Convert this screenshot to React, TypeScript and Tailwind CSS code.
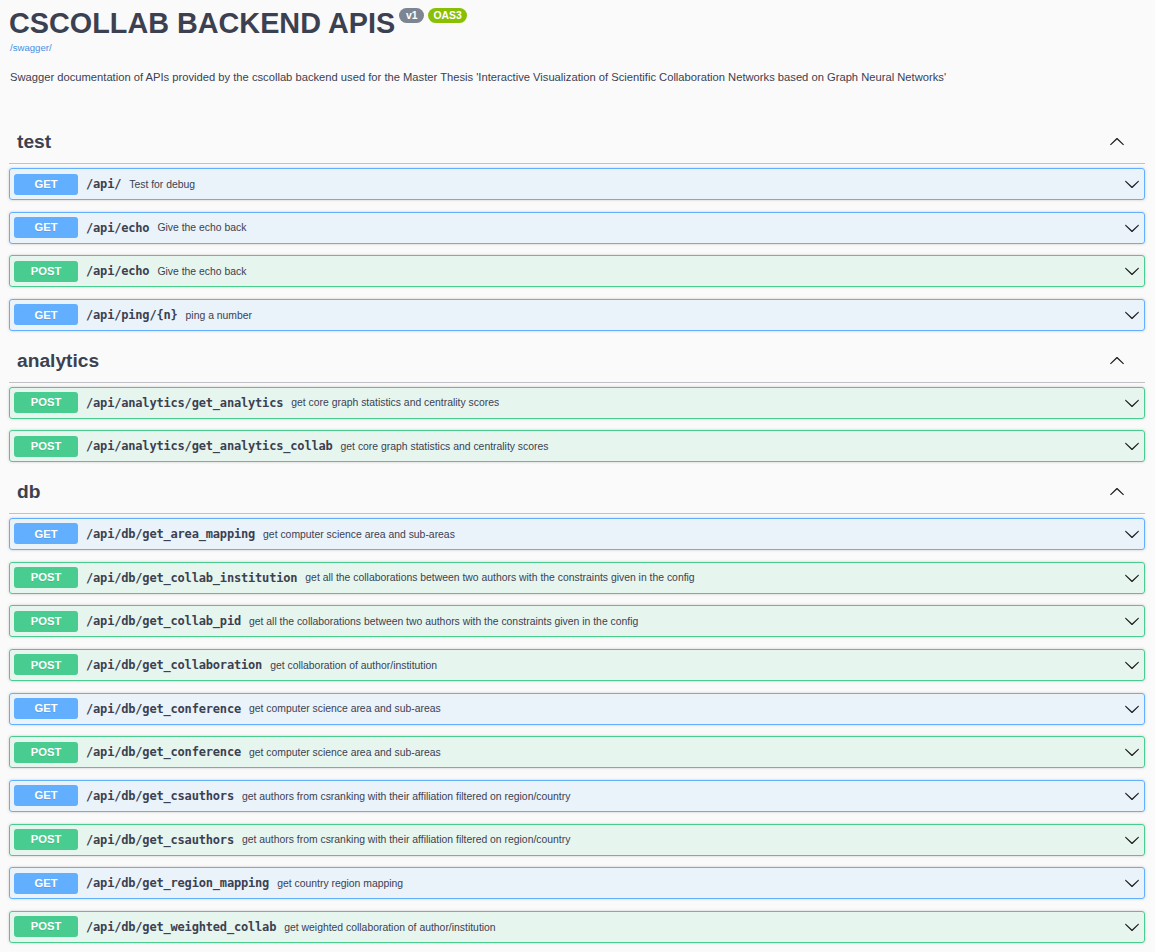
import React from "react";

type Op = { method: "GET" | "POST"; path: string; desc: string };
type Section = { name: string; ops: Op[] };

const sections: Section[] = [
  {
    name: "test",
    ops: [
      { method: "GET", path: "/api/", desc: "Test for debug" },
      { method: "GET", path: "/api/echo", desc: "Give the echo back" },
      { method: "POST", path: "/api/echo", desc: "Give the echo back" },
      { method: "GET", path: "/api/ping/{n}", desc: "ping a number" },
    ],
  },
  {
    name: "analytics",
    ops: [
      { method: "POST", path: "/api/analytics/get_analytics", desc: "get core graph statistics and centrality scores" },
      { method: "POST", path: "/api/analytics/get_analytics_collab", desc: "get core graph statistics and centrality scores" },
    ],
  },
  {
    name: "db",
    ops: [
      { method: "GET", path: "/api/db/get_area_mapping", desc: "get computer science area and sub-areas" },
      { method: "POST", path: "/api/db/get_collab_institution", desc: "get all the collaborations between two authors with the constraints given in the config" },
      { method: "POST", path: "/api/db/get_collab_pid", desc: "get all the collaborations between two authors with the constraints given in the config" },
      { method: "POST", path: "/api/db/get_collaboration", desc: "get collaboration of author/institution" },
      { method: "GET", path: "/api/db/get_conference", desc: "get computer science area and sub-areas" },
      { method: "POST", path: "/api/db/get_conference", desc: "get computer science area and sub-areas" },
      { method: "GET", path: "/api/db/get_csauthors", desc: "get authors from csranking with their affiliation filtered on region/country" },
      { method: "POST", path: "/api/db/get_csauthors", desc: "get authors from csranking with their affiliation filtered on region/country" },
      { method: "GET", path: "/api/db/get_region_mapping", desc: "get country region mapping" },
      { method: "POST", path: "/api/db/get_weighted_collab", desc: "get weighted collaboration of author/institution" },
    ],
  },
];

const ARROW =
  "M17.418 6.109c.272-.268.709-.268.979 0s.271.701 0 .969l-7.908 7.83c-.27.268-.707.268-.979 0l-7.908-7.83c-.27-.268-.27-.701 0-.969.271-.268.709-.268.979 0L10 13.25l7.418-7.141z";

function Arrow({ up }: { up?: boolean }) {
  return (
    <svg
      width="16"
      height="16"
      viewBox="0 0 20 20"
      className={up ? "rotate-180" : ""}
      aria-hidden="true"
    >
      <path d={ARROW} fill="#1b1b1b" />
    </svg>
  );
}

function OpBlock({ op }: { op: Op }) {
  const isGet = op.method === "GET";
  return (
    <div
      className={
        isGet
          ? "mb-[11.67px] h-[32px] rounded-[3px] border border-[#61affe] bg-[rgba(97,175,254,0.1)] shadow-[0_0_3px_rgba(0,0,0,0.19)] flex items-center pl-[4px] pr-[4px]"
          : "mb-[11.67px] h-[32px] rounded-[3px] border border-[#49cc90] bg-[rgba(73,204,144,0.1)] shadow-[0_0_3px_rgba(0,0,0,0.19)] flex items-center pl-[4px] pr-[4px]"
      }
    >
      <div
        className={
          isGet
            ? "w-[64px] h-[21px] rounded-[3px] bg-[#61affe] text-white font-bold text-[11.2px] flex items-center justify-center [text-shadow:0_1px_0_rgba(0,0,0,0.1)]"
            : "w-[64px] h-[21px] rounded-[3px] bg-[#49cc90] text-white font-bold text-[11.2px] flex items-center justify-center [text-shadow:0_1px_0_rgba(0,0,0,0.1)]"
        }
      >
        {op.method}
      </div>
      <div className="px-[8px] text-[12px] tracking-[-0.18px] font-bold text-[#3b4151] font-['DejaVu_Sans_Mono',monospace] whitespace-nowrap">
        {op.path}
      </div>
      <div className="flex-1 text-[10.4px] text-[#3b4151] whitespace-nowrap pt-[1px]">{op.desc}</div>
      <Arrow />
    </div>
  );
}

export default function App() {
  return (
    <div className="min-h-[952px] bg-[#fafafa] font-['Liberation_Sans',Arial,sans-serif] text-[#3b4151] pl-[9px] pr-[10px]">
      <div className="pt-[5px] flex items-start">
        <h2 className="text-[28.8px] leading-[36px] font-bold text-[#3b4151] m-0">CSCOLLAB BACKEND APIS</h2>
        <span className="ml-[4px] mt-[3px] h-[15px] rounded-full bg-[#7d8492] text-white font-bold text-[10.4px] px-[4px] flex items-center whitespace-pre">
          {" v1 "}
        </span>
        <span className="ml-[4px] mt-[3px] h-[15px] rounded-full bg-[#89bf04] text-white font-bold text-[10.4px] px-[5px] flex items-center">
          OAS3
        </span>
      </div>
      <div className="mt-[1px] ml-[1px] text-[9.6px] leading-[12px] text-[#4990e2]">/swagger/</div>
      <p className="mt-[16px] ml-[1px] text-[11.2px] leading-[14px] text-[#3b4151]">
        Swagger documentation of APIs provided by the cscollab backend used for the Master Thesis 'Interactive Visualization of Scientific Collaboration Networks based on Graph Neural Networks'
      </p>
      <div className="mt-[40px]">
        {sections.map((s) => (
          <div key={s.name}>
            <div className="h-[40px] border-b border-[rgba(59,65,81,0.3)] flex items-center pl-[8px] pr-[20px] pb-[3px] mb-[4px]">
              <h3 className="flex-1 text-[19.2px] font-bold text-[#3b4151] leading-[24px]">{s.name}</h3>
              <Arrow up />
            </div>
            {s.ops.map((op, i) => (
              <OpBlock key={i} op={op} />
            ))}
          </div>
        ))}
      </div>
    </div>
  );
}
